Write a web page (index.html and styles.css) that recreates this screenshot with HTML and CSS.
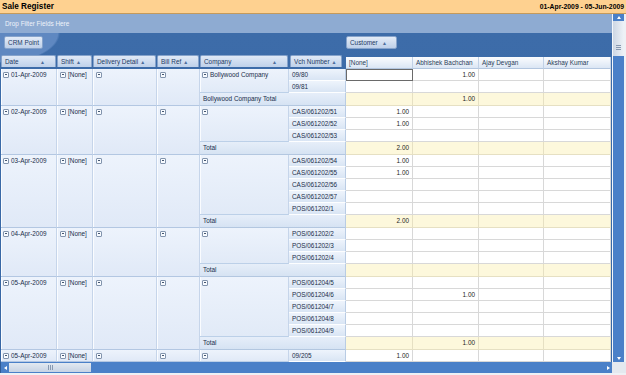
FILE: index.html
```html
<!DOCTYPE html>
<html lang="en">
<head>
  <meta charset="UTF-8" />
  <title>Sale Register</title>
  <link rel="stylesheet" href="styles.css">
</head>
<body>
  <div class="title-bar">
    <span class="title">Sale Register</span>
    <span class="period">01-Apr-2009 - 05-Jun-2009</span>
  </div>

  <div class="main">
    <div class="content">
      <div class="filter-area">Drop Filter Fields Here</div>

      <div class="pivot">
        <div class="toolbar">
          <span class="field-btn crm">CRM Point</span>
          <span class="field-btn customer">Customer <i class="sort">&#9650;</i></span>
        </div>

        <table class="grid">
          <colgroup>
            <col class="c-date"><col class="c-shift"><col class="c-delivery"><col class="c-bill">
            <col class="c-company"><col class="c-vch"><col class="c-none"><col class="c-abhi">
            <col class="c-ajay"><col class="c-akshay">
          </colgroup>
          <thead>
            <tr>
              <th><div class="hbtn">Date <i class="sort">&#9650;</i></div></th>
              <th><div class="hbtn">Shift <i class="sort">&#9650;</i></div></th>
              <th><div class="hbtn">Delivery Detail <i class="sort">&#9650;</i></div></th>
              <th><div class="hbtn">Bill Ref <i class="sort">&#9650;</i></div></th>
              <th><div class="hbtn">Company <i class="sort">&#9650;</i></div></th>
              <th><div class="hbtn last">Vch Number <i class="sort">&#9650;</i></div></th>
              <th><div class="dhead">[None]</div></th>
              <th><div class="dhead">Abhishek Bachchan</div></th>
              <th><div class="dhead">Ajay Devgan</div></th>
              <th><div class="dhead">Akshay Kumar</div></th>
            </tr>
          </thead>
          <tbody>
            <!-- 01-Apr -->
            <tr>
              <td class="rf" rowspan="3"><span class="exp"></span>01-Apr-2009</td>
              <td class="rf" rowspan="3"><span class="exp"></span>[None]</td>
              <td class="rf" rowspan="3"><span class="exp"></span></td>
              <td class="rf" rowspan="3"><span class="exp"></span></td>
              <td class="co" rowspan="2"><span class="exp"></span>Bollywood Company</td>
              <td class="vch">09/80</td>
              <td class="v sel"></td><td class="v">1.00</td><td class="v"></td><td class="v"></td>
            </tr>
            <tr>
              <td class="vch">09/81</td>
              <td class="v"></td><td class="v"></td><td class="v"></td><td class="v"></td>
            </tr>
            <tr class="tot gend">
              <td class="tl" colspan="2">Bollywood Company Total</td>
              <td class="v"></td><td class="v">1.00</td><td class="v"></td><td class="v"></td>
            </tr>

            <!-- 02-Apr -->
            <tr>
              <td class="rf" rowspan="4"><span class="exp"></span>02-Apr-2009</td>
              <td class="rf" rowspan="4"><span class="exp"></span>[None]</td>
              <td class="rf" rowspan="4"><span class="exp"></span></td>
              <td class="rf" rowspan="4"><span class="exp"></span></td>
              <td class="co" rowspan="3"><span class="exp"></span></td>
              <td class="vch">CAS/061202/51</td>
              <td class="v">1.00</td><td class="v"></td><td class="v"></td><td class="v"></td>
            </tr>
            <tr>
              <td class="vch">CAS/061202/52</td>
              <td class="v">1.00</td><td class="v"></td><td class="v"></td><td class="v"></td>
            </tr>
            <tr>
              <td class="vch">CAS/061202/53</td>
              <td class="v"></td><td class="v"></td><td class="v"></td><td class="v"></td>
            </tr>
            <tr class="tot gend">
              <td class="tl" colspan="2">Total</td>
              <td class="v">2.00</td><td class="v"></td><td class="v"></td><td class="v"></td>
            </tr>

            <!-- 03-Apr -->
            <tr>
              <td class="rf" rowspan="6"><span class="exp"></span>03-Apr-2009</td>
              <td class="rf" rowspan="6"><span class="exp"></span>[None]</td>
              <td class="rf" rowspan="6"><span class="exp"></span></td>
              <td class="rf" rowspan="6"><span class="exp"></span></td>
              <td class="co" rowspan="5"><span class="exp"></span></td>
              <td class="vch">CAS/061202/54</td>
              <td class="v">1.00</td><td class="v"></td><td class="v"></td><td class="v"></td>
            </tr>
            <tr>
              <td class="vch">CAS/061202/55</td>
              <td class="v">1.00</td><td class="v"></td><td class="v"></td><td class="v"></td>
            </tr>
            <tr>
              <td class="vch">CAS/061202/56</td>
              <td class="v"></td><td class="v"></td><td class="v"></td><td class="v"></td>
            </tr>
            <tr>
              <td class="vch">CAS/061202/57</td>
              <td class="v"></td><td class="v"></td><td class="v"></td><td class="v"></td>
            </tr>
            <tr>
              <td class="vch">POS/061202/1</td>
              <td class="v"></td><td class="v"></td><td class="v"></td><td class="v"></td>
            </tr>
            <tr class="tot gend">
              <td class="tl" colspan="2">Total</td>
              <td class="v">2.00</td><td class="v"></td><td class="v"></td><td class="v"></td>
            </tr>

            <!-- 04-Apr -->
            <tr>
              <td class="rf" rowspan="4"><span class="exp"></span>04-Apr-2009</td>
              <td class="rf" rowspan="4"><span class="exp"></span>[None]</td>
              <td class="rf" rowspan="4"><span class="exp"></span></td>
              <td class="rf" rowspan="4"><span class="exp"></span></td>
              <td class="co" rowspan="3"><span class="exp"></span></td>
              <td class="vch">POS/061202/2</td>
              <td class="v"></td><td class="v"></td><td class="v"></td><td class="v"></td>
            </tr>
            <tr>
              <td class="vch">POS/061202/3</td>
              <td class="v"></td><td class="v"></td><td class="v"></td><td class="v"></td>
            </tr>
            <tr>
              <td class="vch">POS/061202/4</td>
              <td class="v"></td><td class="v"></td><td class="v"></td><td class="v"></td>
            </tr>
            <tr class="tot gend">
              <td class="tl" colspan="2">Total</td>
              <td class="v"></td><td class="v"></td><td class="v"></td><td class="v"></td>
            </tr>

            <!-- 05-Apr -->
            <tr>
              <td class="rf" rowspan="6"><span class="exp"></span>05-Apr-2009</td>
              <td class="rf" rowspan="6"><span class="exp"></span>[None]</td>
              <td class="rf" rowspan="6"><span class="exp"></span></td>
              <td class="rf" rowspan="6"><span class="exp"></span></td>
              <td class="co" rowspan="5"><span class="exp"></span></td>
              <td class="vch">POS/061204/5</td>
              <td class="v"></td><td class="v"></td><td class="v"></td><td class="v"></td>
            </tr>
            <tr>
              <td class="vch">POS/061204/6</td>
              <td class="v"></td><td class="v">1.00</td><td class="v"></td><td class="v"></td>
            </tr>
            <tr>
              <td class="vch">POS/061204/7</td>
              <td class="v"></td><td class="v"></td><td class="v"></td><td class="v"></td>
            </tr>
            <tr>
              <td class="vch">POS/061204/8</td>
              <td class="v"></td><td class="v"></td><td class="v"></td><td class="v"></td>
            </tr>
            <tr>
              <td class="vch">POS/061204/9</td>
              <td class="v"></td><td class="v"></td><td class="v"></td><td class="v"></td>
            </tr>
            <tr class="tot gend">
              <td class="tl" colspan="2">Total</td>
              <td class="v"></td><td class="v">1.00</td><td class="v"></td><td class="v"></td>
            </tr>

            <!-- next day -->
            <tr>
              <td class="rf"><span class="exp"></span>05-Apr-2009</td>
              <td class="rf"><span class="exp"></span>[None]</td>
              <td class="rf"><span class="exp"></span></td>
              <td class="rf"><span class="exp"></span></td>
              <td class="co"><span class="exp"></span></td>
              <td class="vch">09/205</td>
              <td class="v">1.00</td><td class="v"></td><td class="v"></td><td class="v"></td>
            </tr>
          </tbody>
        </table>
      </div>
    </div>

    <div class="vscroll">
      <div class="vs-btn"><span class="arrow-up"></span></div>
      <div class="vs-thumb"><span class="grip-h"></span></div>
      <div class="vs-track"></div>
      <div class="vs-btn"><span class="arrow-down"></span></div>
    </div>
  </div>

  <div class="hscroll">
    <div class="hs-btn"><span class="arrow-left"></span></div>
    <div class="hs-thumb"><span class="grip-v"></span></div>
    <div class="hs-track"></div>
    <div class="hs-btn"><span class="arrow-right"></span></div>
    <div class="corner"></div>
  </div>
</body>
</html>
```

FILE: styles.css
```css
* {
  box-sizing: border-box;
}

body {
  margin: 0;
  width: 626px;
  height: 375px;
  overflow: hidden;
  background: #eef1f5;
  font-family: "Liberation Sans", Arial, sans-serif;
  font-size: 6.4px;
  color: #1a2d49;
}

/* title */
.title-bar {
  height: 14px;
  background: #fed190;
  border-bottom: 1px solid #c49a5c;
  display: flex;
  justify-content: space-between;
  align-items: center;
  padding: 0 2px;
  color: #000;
  font-weight: bold;
}

.title {
  font-size: 8.2px;
}

.period {
  font-size: 6.8px;
}

.main {
  display: flex;
  height: 348px;
}

.content {
  width: 612px;
  display: flex;
  flex-direction: column;
}

.filter-area {
  height: 19px;
  line-height: 19px;
  padding-left: 5px;
  background: #8eabd2;
  color: #eef3fa;
}

.pivot {
  flex: 1;
  overflow: hidden;
  background:
    radial-gradient(ellipse 60px 30px at 0 0, #5f88c1 96%, transparent 100%),
    linear-gradient(#3d6ca9, #3766a4);
}

.toolbar {
  display: grid;
  grid-template-columns: 346px 1fr;
  align-items: start;
  height: 22px;
  padding-top: 3px;
}

.field-btn {
  display: flex;
  align-items: center;
  height: 13px;
  padding: 0 3px;
  border: 1px solid #86a3cb;
  border-radius: 2px;
  background: linear-gradient(#e3ebf7, #bed0e9);
  color: #1e3a63;
}

.crm {
  width: 39px;
  margin-left: 4px;
  justify-content: center;
}

.customer {
  width: 51px;
  justify-content: space-between;
  padding-right: 9px;
}

.sort {
  font-style: normal;
  font-size: 5px;
  color: #4d6e9c;
}

/* grid */
.grid {
  margin-left: 1px;
  width: 610px;
  table-layout: fixed;
  border-collapse: separate;
  border-spacing: 0;
}

.c-date { width: 56px; }
.c-shift { width: 36px; }
.c-delivery { width: 64px; }
.c-bill { width: 43px; }
.c-company { width: 89px; }
.c-vch { width: 57px; }
.c-none { width: 67px; }
.c-abhi { width: 66px; }
.c-ajay { width: 65px; }
.c-akshay { width: 67px; }

.grid th {
  height: 14px;
  padding: 0;
  vertical-align: top;
  font-weight: normal;
  text-align: left;
}

.hbtn {
  display: flex;
  justify-content: space-between;
  align-items: center;
  gap: 2px;
  height: 12px;
  margin-right: 1px;
  padding: 0 10px 0 3px;
  border: 1px solid #86a3cb;
  border-bottom: none;
  border-radius: 2px 2px 0 0;
  background: linear-gradient(#e0e9f6, #bfd1ea);
  color: #1e3a63;
  white-space: nowrap;
}

.hbtn.last {
  margin: 0 4px 0 1px;
  padding-right: 5px;
}

.dhead {
  height: 12px;
  margin-top: 2px;
  padding-left: 3px;
  line-height: 11px;
  background: linear-gradient(#fbfcfe, #dbe6f4);
  border-right: 1px solid #c1d1e6;
  border-bottom: 1px solid #b3c6df;
  color: #2a3d57;
  white-space: nowrap;
  overflow: hidden;
}

.grid td {
  height: 12px;
  padding: 0 0 0 3px;
  line-height: 11px;
  vertical-align: top;
  white-space: nowrap;
  overflow: hidden;
  border-right: 1px solid;
  border-bottom: 1px solid;
}

.grid tr.gend td {
  height: 13px;
}

.grid td.rf {
  padding-left: 2px;
  background: linear-gradient(#edf3fc, #e0e9f7);
  border-color: #c6d5ea #c6d5ea #b3c7e2;
  box-shadow: inset 1px 0 #fafcff;
}

.grid td.rf + td.rf {
  padding-left: 3px;
}

.grid td.co {
  padding-left: 2px;
  background: linear-gradient(#edf3fc, #e1eaf7);
  border-color: #c6d5ea #c6d5ea #bcd0e8;
  box-shadow: inset 1px 0 #fafcff;
}

.grid td.vch {
  background: linear-gradient(#eef4fc, #d9e5f4);
  border-color: #b9cce4 #b9cce4 #fdfeff;
}

.grid td.tl {
  background: linear-gradient(#e6eef9, #d6e3f3);
  border-color: #b9cce4 #b9cce4 #b3c7e0;
}

.grid td.v {
  padding: 0 3px 0 0;
  text-align: right;
  background: #fff;
  border-color: #d8d8d8;
  color: #222;
}

.grid tr.tot td.v {
  background: #fdf8dc;
  border-color: #e6e0c3;
}

.grid td.sel {
  outline: 1px solid #6a6a6a;
  outline-offset: -1px;
}

.exp {
  display: inline-block;
  width: 6px;
  height: 6px;
  margin: 0 2px 0 0;
  vertical-align: -0.5px;
  border: 1px solid #8294ad;
  border-radius: 1px;
  background: linear-gradient(#43556f, #43556f) center / 2px 1px no-repeat, #f8fbff;
}

/* scrollbars */
.vscroll {
  width: 12px;
  display: flex;
  flex-direction: column;
  border-left: 1px solid #f4f7fb;
}

.vs-btn {
  flex-shrink: 0;
  height: 7px;
  display: flex;
  align-items: center;
  justify-content: center;
  background: #4a80c8;
}

.vs-thumb {
  flex-shrink: 0;
  height: 35px;
  display: flex;
  align-items: flex-end;
  justify-content: center;
  padding-bottom: 6px;
  background: linear-gradient(90deg, #cdd7e4, #eef2f7);
}

.vs-track {
  flex: 1;
  background: #4a80c8;
}

.hscroll {
  display: flex;
  height: 11px;
  width: 626px;
  background: #4a80c8;
  border-left: 1px solid #2f5b96;
}

.hs-btn {
  width: 8px;
  display: flex;
  align-items: center;
  justify-content: center;
}

.hs-thumb {
  width: 82px;
  margin: 1px 0;
  display: flex;
  align-items: center;
  justify-content: center;
  background: linear-gradient(#e3e9f1, #c6d3e4);
}

.hs-track {
  flex: 1;
}

.corner {
  width: 14px;
  background: #e4e9ef;
}

.grip-h {
  width: 5px;
  height: 5px;
  background: repeating-linear-gradient(#8799b1 0 1px, transparent 1px 2px);
}

.grip-v {
  width: 5px;
  height: 5px;
  background: repeating-linear-gradient(90deg, #8799b1 0 1px, transparent 1px 2px);
}

.arrow-up,
.arrow-down,
.arrow-left,
.arrow-right {
  width: 0;
  height: 0;
  border: 2.5px solid transparent;
}

.arrow-up {
  border-top: none;
  border-bottom: 3px solid #fff;
}

.arrow-down {
  border-bottom: none;
  border-top: 3px solid #fff;
}

.arrow-left {
  border-left: none;
  border-right: 3px solid #fff;
}

.arrow-right {
  border-right: none;
  border-left: 3px solid #fff;
}
```
